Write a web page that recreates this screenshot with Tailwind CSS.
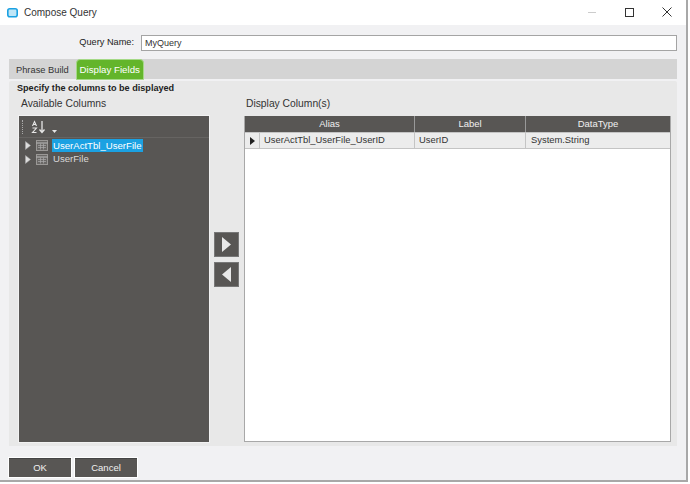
<!DOCTYPE html>
<html lang="en">
<head>
    <meta charset="UTF-8">
    <title>Compose Query</title>
    <script src="https://cdn.jsdelivr.net/npm/@tailwindcss/browser@4"></script>
</head>
<body class="bg-white font-['Liberation_Sans',sans-serif] text-[9.5px] text-[#222] overflow-hidden">
<div class="w-[690px] h-[484px] overflow-hidden bg-white">
    <div class="w-[688px] h-[482px] flex flex-col border-r-2 border-b-2 border-[#a8a8a8]">

        <!-- Title bar -->
        <header class="h-[25px] shrink-0 bg-white flex items-center pl-[7px]">
            <svg class="w-[11px] h-[10px] mr-[6px]" viewBox="0 0 11 10"><rect x="0.8" y="0.8" width="9.4" height="8" rx="2" fill="#bfe6f7" stroke="#1ba1e2" stroke-width="1.6"/></svg>
            <span class="text-[10px] text-[#333]">Compose Query</span>
            <div class="ml-auto flex items-center">
                <div class="w-[8px] h-px bg-[#ccc] mr-[29px]"></div>
                <div class="w-[9px] h-[9px] border border-[#333] mr-[28px] mb-px"></div>
                <svg class="w-[10px] h-[10px] mr-[14px] mb-px" viewBox="0 0 10 10"><path d="M0.5 0.5L9.5 9.5M9.5 0.5L0.5 9.5" stroke="#333" stroke-width="1" fill="none"/></svg>
            </div>
        </header>

        <!-- Dialog body -->
        <div class="flex-1 bg-[#f1f1f3] pt-[10px] px-[9px] flex flex-col">
            <div class="flex items-center h-[16px] mb-[8px]">
                <label class="w-[125px] text-right text-[9.2px]">Query Name:</label>
                <input value="MyQuery" class="ml-[7px] flex-1 h-[16px] bg-white border border-[#a4a4a4] px-[3px] text-[9px] text-[#333]">
            </div>

            <div class="h-[20px] bg-[#d4d4d4] flex items-end pl-[7px]">
                <span class="h-[20px] leading-[23px] text-[9.3px] text-[#333] mr-[7px]">Phrase Build</span>
                <span class="h-[21px] w-[68px] -mb-px rounded-t-[4px] border border-[#a5d987] bg-[#63b52b] text-[9.7px] text-white text-center leading-[19px] relative">Display Fields</span>
            </div>

            <section class="mt-[2px] h-[365px] bg-[#e8e8e8] rounded-t-[2px] pl-[10px] pr-[6px] pb-[4px] flex flex-col">
                <p class="font-bold text-[9.1px] text-[#222] h-[12px] leading-[12px] mt-[1px] -ml-[2px]">Specify the columns to be displayed</p>
                <div class="flex h-[15px] mt-[2px] leading-[15px] text-[10.3px]">
                    <span class="w-[227px] pl-[2px] text-[#333]">Available Columns</span>
                    <span class="text-[#333]">Display Column(s)</span>
                </div>
                <div class="flex flex-1 mt-[5px] min-h-0">
                    <!-- Column tree -->
                    <div class="w-[192px] shrink-0 -ml-px -mt-px -mb-px bg-[#585654] border border-[#f2f2f2] text-[9.6px] flex flex-col">
                        <div class="h-[22px] shrink-0 border-b border-[#666462] flex items-center pl-[3px]">
                            <div class="w-px h-[14px] border-l border-dotted border-[#aaa]"></div>
                            <svg class="w-[17px] h-[14px] ml-[7px]" viewBox="0 0 17 14" fill="none" stroke="#e6e6e6"><path d="M12 1V12M9.5 9.5L12 12.5L14.5 9.5" stroke-width="1.3"/><path d="M2.5 6L4.5 1.5L6.5 6M3.2 4.5H5.8" stroke-width="1.1"/><path d="M2.5 8H6.5L2.5 12.5H6.5" stroke-width="1.1"/></svg>
                            <svg class="w-[5px] h-[3px] ml-[5px] mt-[9px]" viewBox="0 0 5 3"><path d="M0 0H5L2.5 3Z" fill="#e6e6e6"/></svg>
                        </div>
                        <div class="flex items-center h-[14px] pl-[6px]">
                            <svg class="w-[6px] h-[9px]" viewBox="0 0 6 9"><path d="M0.5 0.5L5.5 4.5L0.5 8.5Z" fill="#ddd" stroke="#aaa" stroke-width="0.5"/></svg>
                            <svg class="w-[12px] h-[11px] ml-[5px]" viewBox="0 0 12 11" fill="none"><rect x="0.5" y="0.5" width="11" height="10" fill="#6a6866" stroke="#9a9896"/><path d="M0.5 3H11.5" stroke="#bbb"/><path d="M2 5.5H10M2 7.5H10M4.5 3.5V9.5M7.5 3.5V9.5" stroke="#aaa" stroke-width="0.7"/></svg>
                            <span class="ml-[4px] px-[1px] bg-[#1ba1e2] text-white leading-[13px]">UserActTbl_UserFile</span>
                        </div>
                        <div class="flex items-center h-[14px] pl-[6px]">
                            <svg class="w-[6px] h-[9px]" viewBox="0 0 6 9"><path d="M0.5 0.5L5.5 4.5L0.5 8.5Z" fill="#ddd" stroke="#aaa" stroke-width="0.5"/></svg>
                            <svg class="w-[12px] h-[11px] ml-[5px]" viewBox="0 0 12 11" fill="none"><rect x="0.5" y="0.5" width="11" height="10" fill="#6a6866" stroke="#9a9896"/><path d="M0.5 3H11.5" stroke="#bbb"/><path d="M2 5.5H10M2 7.5H10M4.5 3.5V9.5M7.5 3.5V9.5" stroke="#aaa" stroke-width="0.7"/></svg>
                            <span class="ml-[4px] px-[1px] text-[#d8d8d8]">UserFile</span>
                        </div>
                    </div>

                    <!-- Move buttons -->
                    <div class="w-[34px] shrink-0 flex flex-col items-center pt-[116px] pr-[1px] gap-[5px]">
                        <button class="w-[25px] h-[25px] bg-[#585654] border border-[#777] flex items-center justify-center">
                            <svg class="w-[9px] h-[15px]" viewBox="0 0 9 15"><path d="M0 0L9 7.5L0 15Z" fill="#e8e8e8"/></svg>
                        </button>
                        <button class="w-[25px] h-[25px] bg-[#585654] border border-[#777] flex items-center justify-center">
                            <svg class="w-[9px] h-[15px]" viewBox="0 0 9 15"><path d="M9 0L0 7.5L9 15Z" fill="#e8e8e8"/></svg>
                        </button>
                    </div>

                    <!-- Display grid -->
                    <div class="w-[427px] shrink-0 bg-white border border-t-0 border-[#a8a8a8] text-[9.4px] flex flex-col">
                        <div class="flex h-[16px] bg-[#585654] text-[#f0f0f0] text-[9.5px] text-center leading-[16px]">
                            <div class="w-[170px] border-r border-[#999]">Alias</div>
                            <div class="w-[111px] border-r border-[#999]">Label</div>
                            <div class="flex-1">DataType</div>
                        </div>
                        <div class="flex h-[17px] bg-[#ececec] border-t border-b border-[#c4c4c4] leading-[14px] text-[#333]">
                            <div class="w-[15px] border-r border-[#c4c4c4] flex items-center justify-center">
                                <svg class="w-[5px] h-[8px]" viewBox="0 0 5 8"><path d="M0 0L5 4L0 8Z" fill="#222"/></svg>
                            </div>
                            <div class="w-[155px] border-r border-[#c4c4c4] pl-[4px]">UserActTbl_UserFile_UserID</div>
                            <div class="w-[111px] border-r border-[#c4c4c4] pl-[4px]">UserID</div>
                            <div class="flex-1 pl-[5px]">System.String</div>
                        </div>
                    </div>
                </div>
            </section>

            <!-- Footer buttons -->
            <footer class="flex gap-[4px] mt-[12px]">
                <button class="w-[62px] h-[19px] bg-[#585654] border-t border-[#444] outline outline-white text-[#f0f0f0] text-[9.5px]">OK</button>
                <button class="w-[62px] h-[19px] bg-[#585654] border-t border-[#444] outline outline-white text-[#f0f0f0] text-[9.5px]">Cancel</button>
            </footer>
        </div>
    </div>
</div>
</body>
</html>
